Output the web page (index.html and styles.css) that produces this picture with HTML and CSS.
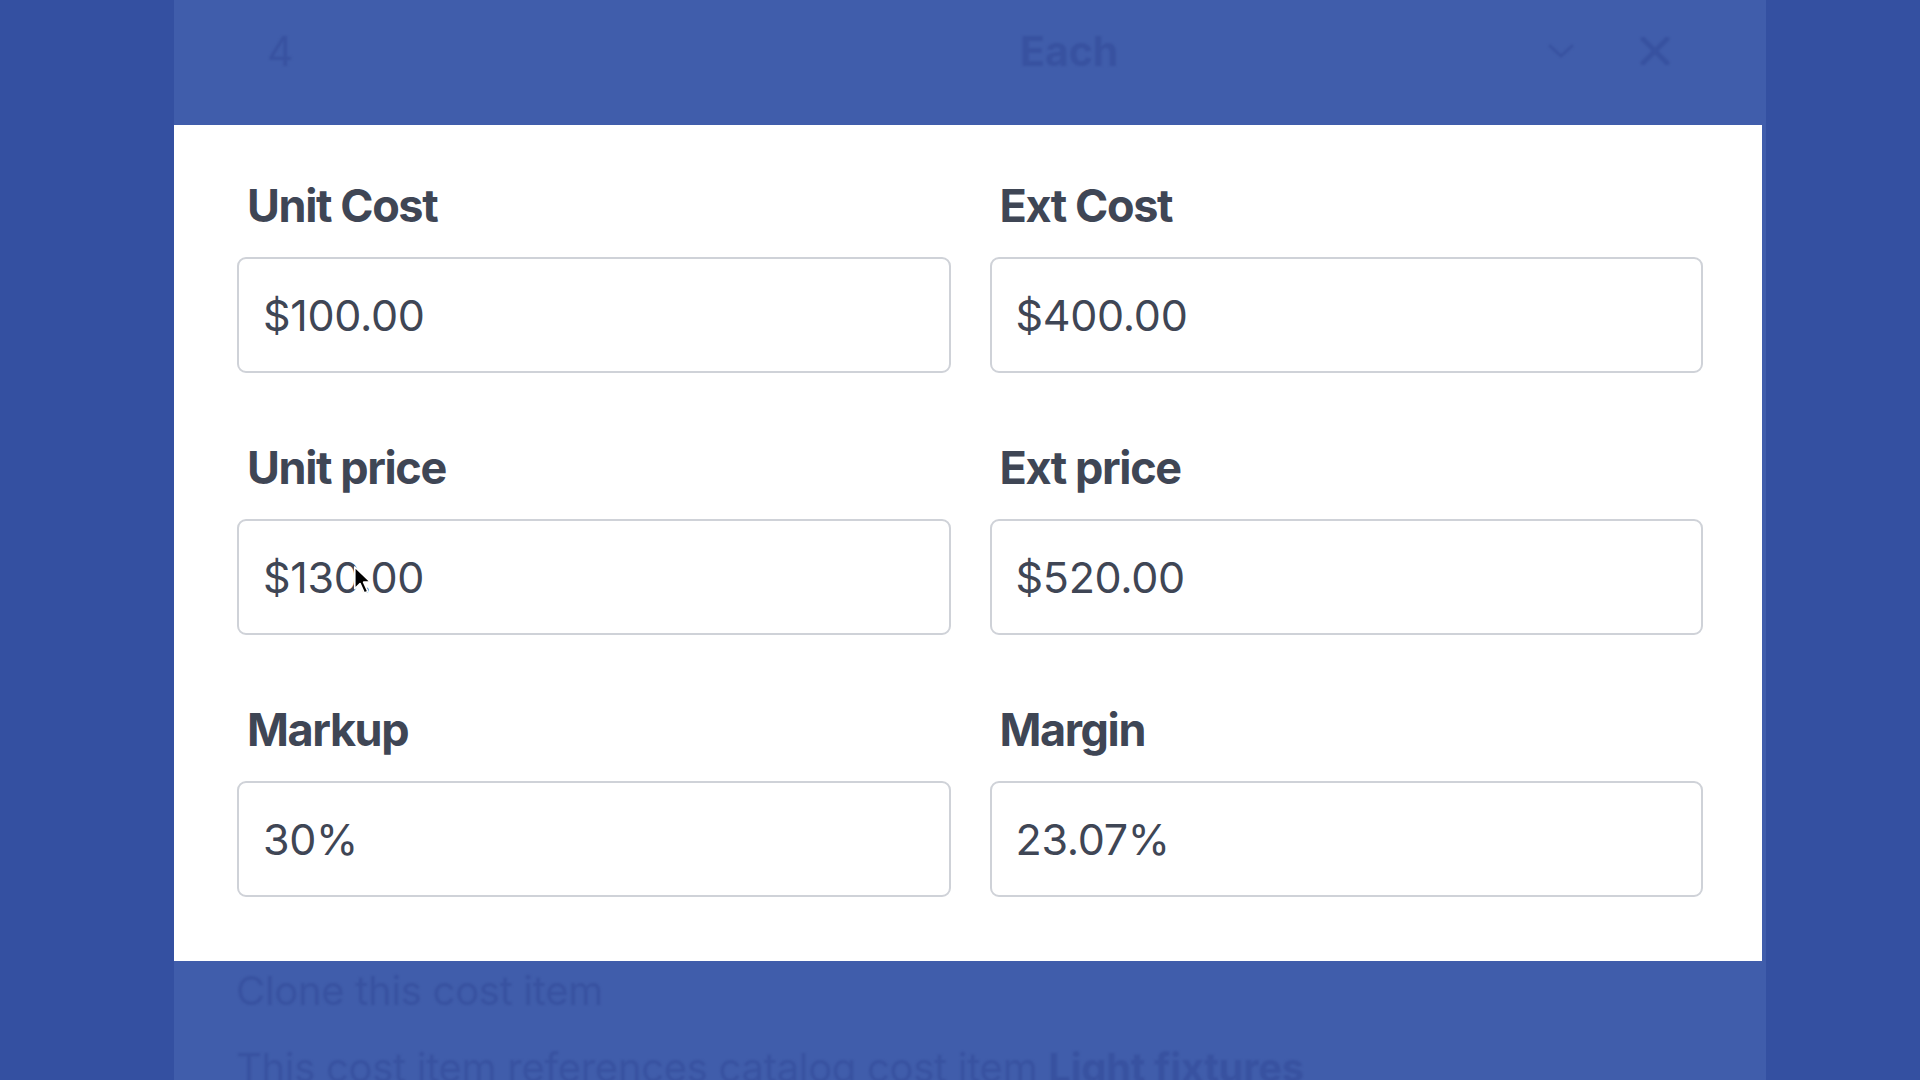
FILE: index.html
```html
<!DOCTYPE html>
<html lang="en">
<head>
    <meta charset="UTF-8">
    <meta name="viewport" content="width=device-width, initial-scale=1.0">
    <title>Cost item</title>
    <link rel="stylesheet" href="styles.css">
</head>
<body>
    <div class="panel">
        <header class="behind item-head">
            <span class="qty">4</span>
            <span class="unit">Each</span>
            <span class="chevron">
                <svg width="28" height="16" viewBox="0 0 28 16"><path d="M3 3 L14 13 L25 3" fill="none" stroke="currentColor" stroke-width="3" stroke-linecap="round" stroke-linejoin="round"/></svg>
            </span>
            <span class="close">
                <svg width="30" height="28" viewBox="0 0 30 28"><path d="M3 2 L27 26 M27 2 L3 26" fill="none" stroke="currentColor" stroke-width="5" stroke-linecap="round"/></svg>
            </span>
        </header>

        <section class="modal">
            <div class="field">
                <label for="unitCost">Unit Cost</label>
                <input id="unitCost" type="text" value="$100.00">
            </div>
            <div class="field">
                <label for="extCost">Ext Cost</label>
                <input id="extCost" type="text" value="$400.00">
            </div>
            <div class="field">
                <label for="unitPrice">Unit price</label>
                <input id="unitPrice" type="text" value="$130.00">
            </div>
            <div class="field">
                <label for="extPrice">Ext price</label>
                <input id="extPrice" type="text" value="$520.00">
            </div>
            <div class="field">
                <label for="markup">Markup</label>
                <input id="markup" type="text" value="30%">
            </div>
            <div class="field">
                <label for="margin">Margin</label>
                <input id="margin" type="text" value="23.07%">
            </div>
        </section>

        <div class="behind item-foot">
            <p class="clone">Clone this cost item</p>
            <p class="ref">This cost item references catalog cost item <b>Light fixtures</b></p>
        </div>
    </div>

    <svg class="cursor" width="20" height="31" viewBox="0 0 17 26">
        <path d="M1.5 1.5 L1.5 20 L6 15.6 L9.6 23.6 L12.6 22.3 L9 14.4 L15 14.4 Z" fill="#000" stroke="#fff" stroke-width="1.4" stroke-linejoin="round"/>
    </svg>
</body>
</html>
```

FILE: styles.css
```css
html, body {
  margin: 0;
  height: 100%;
}
body {
  background: #3450a1;
  font-family: Inter, "Liberation Sans", sans-serif;
  overflow: hidden;
}
.panel {
  width: 1592px;
  height: 1080px;
  margin-left: 174px;
  background: #405dab;
  display: flex;
  flex-direction: column;
  overflow: hidden;
}
.panel > * {
  flex-shrink: 0;
}
.behind {
  color: #3852a0;
  filter: blur(1px);
}
.item-head {
  height: 125px;
  display: flex;
  align-items: center;
  padding: 0 0 23px 93px;
  box-sizing: border-box;
  font-size: 41px;
  font-weight: 700;
}
.item-head .qty {
  width: 753px;
  font-weight: 400;
}
.item-head .unit {
  width: 527px;
}
.item-head .chevron {
  width: 93px;
  display: flex;
}
.item-head .close {
  display: flex;
}
.modal {
  width: 1588px;
  height: 836px;
  box-sizing: border-box;
  background: #fff;
  padding: 54px 59px 64px 63px;
  display: grid;
  grid-template-columns: 1fr 1fr;
  column-gap: 39px;
  row-gap: 68px;
}
.field {
  display: flex;
  flex-direction: column;
}
.field label {
  font-size: 45px;
  line-height: 54px;
  font-weight: 700;
  color: #3f4655;
  letter-spacing: -1.4px;
  padding-left: 10px;
  margin-bottom: 24px;
}
.field input {
  height: 116px;
  box-sizing: border-box;
  border: 2px solid #cfd2d8;
  border-radius: 9px;
  padding: 0 0 0 24px;
  font-family: Inter, "Liberation Sans", sans-serif;
  font-size: 43px;
  color: #3f4655;
  letter-spacing: -0.3px;
  outline: none;
  background: #fff;
}
.item-foot {
  padding-left: 62px;
}
.item-foot p {
  margin: 0;
  font-size: 40px;
  letter-spacing: -0.3px;
}
.item-foot .clone {
  margin-top: 5px;
}
.item-foot .ref {
  margin-top: 28px;
}
.cursor {
  position: absolute;
  left: 353px;
  top: 565px;
}
```
